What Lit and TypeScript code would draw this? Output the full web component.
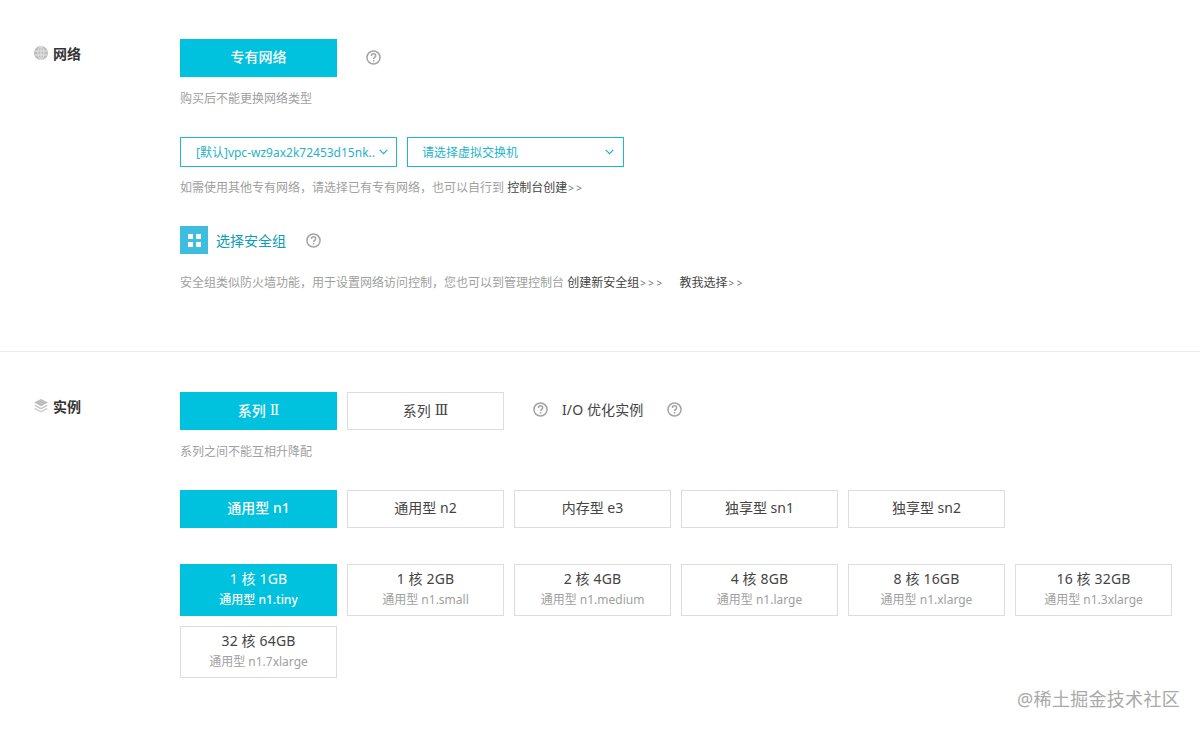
import { LitElement, html, css, svg } from "lit";
import { customElement } from "lit/decorators.js";

const help = () => html`<svg class="help" width="15" height="15" viewBox="0 0 16 16" fill="none">
  <circle cx="8" cy="8" r="7" stroke="#a4a4a4" stroke-width="1.6"/>
  <path d="M5.8 6.3c0-1.4 1-2.2 2.3-2.2s2.2.8 2.2 2c0 1.8-2.2 1.7-2.2 3.6" stroke="#a4a4a4" stroke-width="1.6"/>
  <rect x="7.3" y="10.8" width="1.6" height="1.6" fill="#a4a4a4"/>
</svg>`;

const chevron = () => html`<svg class="chev" width="9" height="6" viewBox="0 0 9 6" fill="none"><path d="M.7.9l3.8 3.7L8.3.9" stroke="#1cb2ca" stroke-width="1.2"/></svg>`;

const globe = svg`<circle cx="7" cy="7" r="7" fill="#bdbdbd"/><g stroke="#eee" stroke-width=".8" fill="none"><ellipse cx="7" cy="7" rx="3" ry="6.4"/><path d="M7 .6v12.8M.8 5h12.4M.8 9h12.4"/></g>`;

const layers = svg`<path d="M7 0l7 3.6-7 3.6L0 3.6z" fill="#bdbdbd"/><path d="M1.6 5.9L7 8.7l5.4-2.8L14 6.8 7 10.4 0 6.8z" fill="#c6c6c6"/><path d="M1.6 9.1L7 11.9l5.4-2.8 1.6.9L7 13.6 0 10z" fill="#cfcfcf"/>`;

const types = ["通用型 n1", "通用型 n2", "内存型 e3", "独享型 sn1", "独享型 sn2"];
const specs = [
  ["1 核 1GB", "通用型 n1.tiny"],
  ["1 核 2GB", "通用型 n1.small"],
  ["2 核 4GB", "通用型 n1.medium"],
  ["4 核 8GB", "通用型 n1.large"],
  ["8 核 16GB", "通用型 n1.xlarge"],
  ["16 核 32GB", "通用型 n1.3xlarge"],
  ["32 核 64GB", "通用型 n1.7xlarge"],
];

@customElement("app-root")
export class AppRoot extends LitElement {
  static styles = css`
    :host {
      display: block;
      position: relative;
      height: 731px;
      overflow: hidden;
      background: #fff;
      color: #333;
      font-family: "Noto Sans", "Noto Sans CJK SC", sans-serif;
      font-size: 12px;
    }
    .section { display: flex; padding-left: 34px; }
    .net { padding-top: 39px; height: 312px; box-sizing: content-box; border-bottom: 1px solid #ececec; }
    .inst { padding-top: 40px; }
    .label {
      width: 146px; flex: none; display: flex; align-items: center; gap: 5px;
      height: 28px; font-size: 14px; font-weight: 600; color: #333;
    }
    .body { display: flex; flex-direction: column; align-items: flex-start; width: 1000px; }
    .row { display: flex; align-items: center; gap: 10px; }
    .first { gap: 29px; }
    .first .help { margin-bottom: 2px; }
    .btn {
      width: 157px; height: 38px; box-sizing: border-box; border: 1px solid #ddd; padding-bottom: 4px;
      display: flex; align-items: center; justify-content: center;
      font-size: 14px; color: #444; background: #fff;
    }
    .series .btn { padding-bottom: 2px; }
    .on { background: #00c1de; border-color: #00c1de; color: #fff; font-weight: 500; }
    .roman { font-family: "DejaVu Serif", "Liberation Serif", serif; font-size: 14px; font-weight: 400; margin-left: 4px; }
    .hint { font-size: 12px; line-height: 16px; color: #a0a0a0; white-space: nowrap; }
    .hint b { font-weight: 400; color: #444; }
    .hint i { font-style: normal; font-size: 10px; color: #777; letter-spacing: 2.4px; margin-left: 1px; }
    .h1 { margin-top: 14px; }
    .select {
      width: 217px; height: 30px; box-sizing: border-box; border: 1px solid #1cb8cf;
      display: flex; align-items: center; justify-content: space-between;
      padding: 0 8px 0 15px; font-size: 12px; color: #26b3c9; white-space: nowrap;
    }
    .select.wide-chev { padding: 0 9px 0 14px; }
    .selects { margin-top: 30px; }
    .h2 { margin-top: 13px; }
    .sec { margin-top: 30px; display: flex; align-items: center; }
    .sec-icon {
      width: 28px; height: 28px; background: #3fbde0; display: flex; align-items: center; justify-content: center;
    }
    .sec-text { margin-left: 8px; font-size: 14px; color: #0b9cb8; }
    .sec .help { margin-left: 20px; }
    .h3 { margin-top: 21px; }
    .gap { display: inline-block; width: 15px; }
    .io { margin: 0 0 4px 19px; display: flex; align-items: center; }
    .io span { margin: 0 24px 0 14px; font-size: 14px; color: #444; letter-spacing: .1px; }
    .h4 { margin-top: 14px; }
    .typerow { margin-top: 30px; }
    .grid {
      margin-top: 36px; display: grid; grid-template-columns: repeat(6, 157px); gap: 10px;
    }
    .spec {
      height: 52px; box-sizing: border-box; border: 1px solid #ddd; padding-bottom: 2px;
      display: flex; flex-direction: column; align-items: center; justify-content: center;
      color: #444; white-space: nowrap;
    }
    .spec .a { font-size: 14px; line-height: 21px; letter-spacing: .15px; }
    .spec .b { font-size: 12px; line-height: 21px; color: #a0a0a0; }
    .spec.on { background: #00c1de; border-color: #00c1de; color: #fff; font-weight: 400; }
    .spec.on .b { color: #fff; font-weight: 500; }
    .mark {
      position: absolute; right: 20px; top: 687px; font-size: 18px; line-height: 25px; color: #a9a9a9;
      letter-spacing: .3px;
    }
  `;

  render() {
    return html`
      <div class="section net">
        <div class="label"><svg width="14" height="14" viewBox="0 0 14 14">${globe}</svg>网络</div>
        <div class="body">
          <div class="row first">
            <div class="btn on">专有网络</div>${help()}
          </div>
          <div class="hint h1">购买后不能更换网络类型</div>
          <div class="row selects">
            <div class="select"><span>[默认]vpc-wz9ax2k72453d15nk..</span>${chevron()}</div>
            <div class="select wide-chev"><span>请选择虚拟交换机</span>${chevron()}</div>
          </div>
          <div class="hint h2">如需使用其他专有网络，请选择已有专有网络，也可以自行到 <b>控制台创建</b><i>&gt;&gt;</i></div>
          <div class="sec">
            <div class="sec-icon">
              <svg width="13" height="13" viewBox="0 0 13 13" fill="#fff">
                <rect width="5" height="5"/><rect x="8" width="5" height="5"/>
                <rect y="8" width="5" height="5"/><rect x="8" y="8" width="5" height="5"/>
              </svg>
            </div>
            <span class="sec-text">选择安全组</span>${help()}
          </div>
          <div class="hint h3">安全组类似防火墙功能，用于设置网络访问控制，您也可以到管理控制台 <b>创建新安全组</b><i>&gt;&gt;&gt;</i><span class="gap"></span><b>教我选择</b><i>&gt;&gt;</i></div>
        </div>
      </div>
      <div class="section inst">
        <div class="label"><svg width="14" height="14" viewBox="0 0 14 14">${layers}</svg>实例</div>
        <div class="body">
          <div class="row series">
            <div class="btn on">系列<span class="roman">Ⅱ</span></div>
            <div class="btn">系列<span class="roman">Ⅲ</span></div>
            <div class="io">${help()}<span>I/O 优化实例</span>${help()}</div>
          </div>
          <div class="hint h4">系列之间不能互相升降配</div>
          <div class="row typerow">
            ${types.map((t, i) => html`<div class="btn ${i === 0 ? "on" : ""}">${t}</div>`)}
          </div>
          <div class="grid">
            ${specs.map(([a, b], i) => html`<div class="spec ${i === 0 ? "on" : ""}"><div class="a">${a}</div><div class="b">${b}</div></div>`)}
          </div>
        </div>
      </div>
      <div class="mark">@稀土掘金技术社区</div>
    `;
  }
}
